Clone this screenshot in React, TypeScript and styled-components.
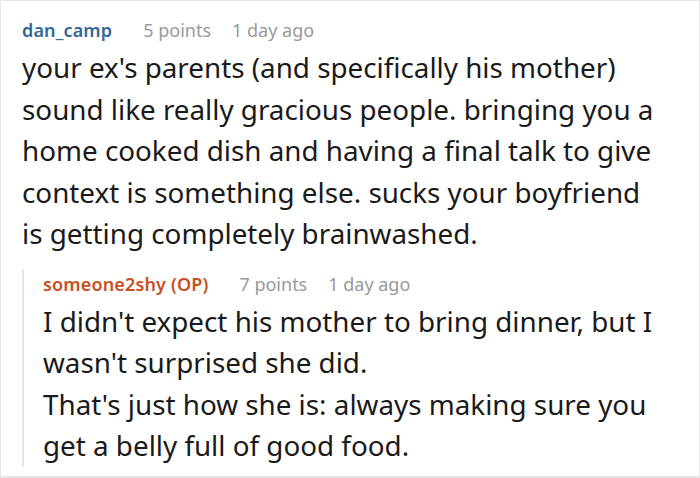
import React from "react";
import styled, { createGlobalStyle } from "styled-components";

const Global = createGlobalStyle`
  html, body { margin: 0; padding: 0; background: #fff; }
  body { font-family: "Noto Sans", "Open Sans", sans-serif; }
`;

const Frame = styled.div`
  width: 700px;
  height: 478px;
  box-sizing: border-box;
  border: 1px solid #e6e6e6;
  border-bottom-width: 2px;
  padding: 14px 20px 0 21px;
  overflow: hidden;
`;

const Header = styled.div`
  display: flex;
  align-items: baseline;
  gap: 31px;
  font-size: 18px;
  line-height: 30px;
`;

const Author = styled.span<{ $op?: boolean }>`
  font-weight: 600;
  letter-spacing: 0.15px;
  color: ${(p) => (p.$op ? "#c8501e" : "#336699")};
`;

const Meta = styled.span`
  color: #999;
  & + & { margin-left: -10px; }
`;

const Body = styled.div`
  font-size: 27.8px;
  line-height: 41.5px;
  color: #1a1a1a;
  margin-top: 2px;
`;

const Reply = styled.div`
  margin-top: 14px;
  border-left: 2px solid #e6e6e6;
  padding-left: 19px;
`;

const Line = styled.div`
  white-space: nowrap;
`;

export default function App() {
  return (
    <>
      <Global />
      <Frame>
        <Header>
          <Author>dan_camp</Author>
          <Meta>5 points</Meta>
          <Meta>1 day ago</Meta>
        </Header>
        <Body>
          <Line>your ex's parents (and specifically his mother)</Line>
          <Line>sound like really gracious people. bringing you a</Line>
          <Line>home cooked dish and having a final talk to give</Line>
          <Line>context is something else. sucks your boyfriend</Line>
          <Line>is getting completely brainwashed.</Line>
        </Body>
        <Reply>
          <Header>
            <Author $op>someone2shy (OP)</Author>
            <Meta>7 points</Meta>
            <Meta>1 day ago</Meta>
          </Header>
          <Body>
            <Line>I didn't expect his mother to bring dinner, but I</Line>
            <Line>wasn't surprised she did.</Line>
            <Line>That's just how she is: always making sure you</Line>
            <Line>get a belly full of good food.</Line>
          </Body>
        </Reply>
      </Frame>
    </>
  );
}
